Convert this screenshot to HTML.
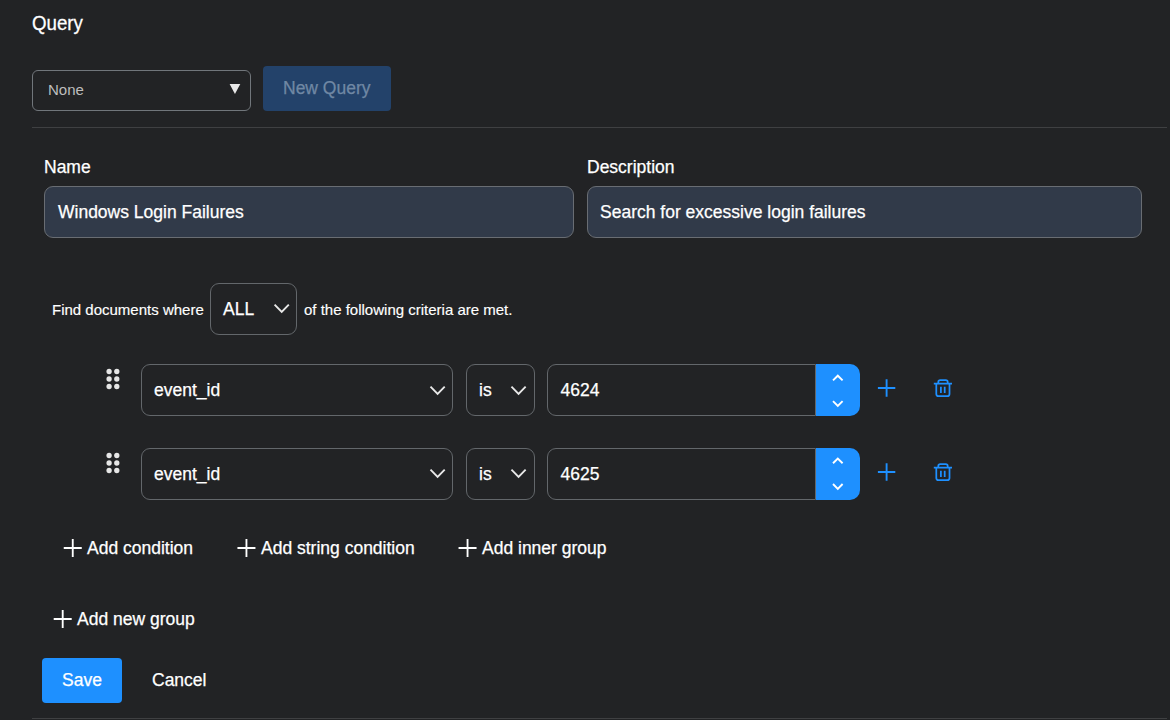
<!DOCTYPE html>
<html lang="en">
<head>
<meta charset="utf-8">
<title>Query</title>
<style>
*{box-sizing:border-box;margin:0;padding:0}
html,body{width:1170px;height:720px;overflow:hidden;background:#222325;color:#fff;
  font-family:"Liberation Sans",Arial,sans-serif;}
.abs{position:absolute}
.t{position:absolute;white-space:nowrap;line-height:1;-webkit-text-stroke:0.25px currentColor}
.box{position:absolute;border:1px solid #63676b;border-radius:9px;background:#222325}
.hr{position:absolute;height:1px;background:#3f4042}
svg{position:absolute;overflow:visible}
</style>
</head>
<body>
<!-- heading -->
<div class="t" style="left:32px;top:14px;font-size:18.72px;transform:scaleY(1.045);transform-origin:0 20%">Query</div>
<!-- query select -->
<div class="box" style="left:32px;top:70px;width:219px;height:41px;border-radius:6px;border-color:#71767b"></div>
<div class="t" style="left:48px;top:82px;font-size:15px;color:#bdbdbd;-webkit-text-stroke:0">None</div>
<svg style="left:229px;top:84px" width="12" height="11" viewBox="0 0 12 11"><g transform="translate(0.6 0)"><polygon points="0,0 10.7,0 5.35,10" fill="#e9e9e9"/></g></svg>
<!-- new query button -->
<div class="abs" style="left:263px;top:66px;width:128px;height:45px;border-radius:4px;background:#23426a"></div>
<div class="t" style="left:283px;top:79.7px;font-size:17.5px;color:#7088a4">New Query</div>
<div class="hr" style="left:32px;top:127px;width:1135px"></div>
<!-- name / description -->
<div class="t" style="left:44px;top:159px;font-size:17.5px">Name</div>
<div class="box" style="left:44px;top:186px;width:530px;height:52px;background:#313a49;border-color:#696d73"></div>
<div class="t" style="left:58px;top:204px;font-size:17.5px">Windows Login Failures</div>
<div class="t" style="left:587px;top:159px;font-size:17.5px">Description</div>
<div class="box" style="left:587px;top:186px;width:555px;height:52px;background:#313a49;border-color:#696d73"></div>
<div class="t" style="left:600px;top:204px;font-size:17.5px">Search for excessive login failures</div>
<!-- criteria line -->
<div class="t" style="left:52px;top:302px;font-size:15px;-webkit-text-stroke:0.15px currentColor">Find documents where</div>
<div class="box" style="left:210px;top:283px;width:87px;height:52px"></div>
<div class="t" style="left:223px;top:301px;font-size:17.5px">ALL</div>
<svg style="left:273px;top:303px" width="17" height="11" viewBox="0 0 17 11"><g transform="translate(0.7 0.5)"><path d="M0.9 1.2 L8 8.4 L15.1 1.2" fill="none" stroke="#e8e8e8" stroke-width="1.9"/></g></svg>
<div class="t" style="left:304px;top:302px;font-size:15px;-webkit-text-stroke:0.15px currentColor">of the following criteria are met.</div>
<!-- row 1 -->
<svg style="left:106px;top:368px" width="15" height="22" viewBox="0 0 15 22"><g transform="translate(0 0.8)"><g fill="#e6e6e6"><circle cx="3.1" cy="2.7" r="2.65"/><circle cx="10.8" cy="2.7" r="2.65"/><circle cx="3.1" cy="10.2" r="2.65"/><circle cx="10.8" cy="10.2" r="2.65"/><circle cx="3.1" cy="17.7" r="2.65"/><circle cx="10.8" cy="17.7" r="2.65"/></g></g></svg>
<div class="box" style="left:141px;top:364px;width:312px;height:52px"></div>
<div class="t" style="left:154px;top:382px;font-size:17.5px">event<span style="position:relative;top:-1px">_</span>id</div>
<svg style="left:429px;top:385px" width="17" height="11" viewBox="0 0 17 11"><g transform="translate(0.6 0.5)"><path d="M0.9 1.2 L8 8.4 L15.1 1.2" fill="none" stroke="#e8e8e8" stroke-width="1.9"/></g></svg>
<div class="box" style="left:466px;top:364px;width:69px;height:52px"></div>
<div class="t" style="left:479px;top:382px;font-size:17.5px">is</div>
<svg style="left:510px;top:385px" width="17" height="11" viewBox="0 0 17 11"><g transform="translate(0.55 0.5)"><path d="M0.9 1.2 L8 8.4 L15.1 1.2" fill="none" stroke="#e8e8e8" stroke-width="1.9"/></g></svg>
<div class="box" style="left:547px;top:364px;width:269px;height:52px;border-radius:9px 0 0 9px"></div>
<div class="abs" style="left:816px;top:364px;width:44px;height:52px;background:#1e90ff;border-radius:0 10px 10px 0"></div>
<svg style="left:831px;top:373px" width="15" height="37" viewBox="0 0 15 37"><g transform="translate(0 0)"><path d="M2 7.4 L6.8 2.7 L11.6 7.4 M2 28.1 L6.8 32.9 L11.6 28.1" fill="none" stroke="#fff" stroke-width="1.9"/></g></svg>
<div class="t" style="left:560.5px;top:382px;font-size:17.5px">4624</div>
<svg style="left:877px;top:379px" width="19" height="19" viewBox="0 0 19 19"><g transform="translate(0.6 0)"><path d="M9 0.3 V17.7 M0.3 9 H17.7" fill="none" stroke="#1e90ff" stroke-width="1.9"/></g></svg>
<svg style="left:933px;top:378px" width="21" height="21" viewBox="0 0 21 21"><g transform="translate(0 0)"><path d="M0.8 5.7 H19 M5.3 5.7 V4 Q5.3 2.1 7.3 2.1 H12.7 Q14.7 2.1 14.7 4 V5.7 M3.3 5.7 V16 Q3.3 18.2 5.5 18.2 H14.3 Q16.5 18.2 16.5 16 V5.7 M7.9 8.7 V15.1 M11.7 8.7 V15.1" fill="none" stroke="#1e90ff" stroke-width="1.75"/></g></svg>
<!-- row 2 -->
<svg style="left:106px;top:452px" width="15" height="22" viewBox="0 0 15 22"><g transform="translate(0 0.8)"><g fill="#e6e6e6"><circle cx="3.1" cy="2.7" r="2.65"/><circle cx="10.8" cy="2.7" r="2.65"/><circle cx="3.1" cy="10.2" r="2.65"/><circle cx="10.8" cy="10.2" r="2.65"/><circle cx="3.1" cy="17.7" r="2.65"/><circle cx="10.8" cy="17.7" r="2.65"/></g></g></svg>
<div class="box" style="left:141px;top:448px;width:312px;height:52px"></div>
<div class="t" style="left:154px;top:466px;font-size:17.5px">event<span style="position:relative;top:-1px">_</span>id</div>
<svg style="left:429px;top:468px" width="17" height="11" viewBox="0 0 17 11"><g transform="translate(0.6 0.4)"><path d="M0.9 1.2 L8 8.4 L15.1 1.2" fill="none" stroke="#e8e8e8" stroke-width="1.9"/></g></svg>
<div class="box" style="left:466px;top:448px;width:69px;height:52px"></div>
<div class="t" style="left:479px;top:466px;font-size:17.5px">is</div>
<svg style="left:510px;top:468px" width="17" height="11" viewBox="0 0 17 11"><g transform="translate(0.55 0.4)"><path d="M0.9 1.2 L8 8.4 L15.1 1.2" fill="none" stroke="#e8e8e8" stroke-width="1.9"/></g></svg>
<div class="box" style="left:547px;top:448px;width:269px;height:52px;border-radius:9px 0 0 9px"></div>
<div class="abs" style="left:816px;top:448px;width:44px;height:52px;background:#1e90ff;border-radius:0 10px 10px 0"></div>
<svg style="left:831px;top:455px" width="15" height="37" viewBox="0 0 15 37"><g transform="translate(0 0.9)"><path d="M2 7.4 L6.8 2.7 L11.6 7.4 M2 28.1 L6.8 32.9 L11.6 28.1" fill="none" stroke="#fff" stroke-width="1.9"/></g></svg>
<div class="t" style="left:560.5px;top:466px;font-size:17.5px">4625</div>
<svg style="left:877px;top:463px" width="19" height="19" viewBox="0 0 19 19"><g transform="translate(0.6 0)"><path d="M9 0.3 V17.7 M0.3 9 H17.7" fill="none" stroke="#1e90ff" stroke-width="1.9"/></g></svg>
<svg style="left:933px;top:462px" width="21" height="21" viewBox="0 0 21 21"><g transform="translate(0 0)"><path d="M0.8 5.7 H19 M5.3 5.7 V4 Q5.3 2.1 7.3 2.1 H12.7 Q14.7 2.1 14.7 4 V5.7 M3.3 5.7 V16 Q3.3 18.2 5.5 18.2 H14.3 Q16.5 18.2 16.5 16 V5.7 M7.9 8.7 V15.1 M11.7 8.7 V15.1" fill="none" stroke="#1e90ff" stroke-width="1.75"/></g></svg>
<!-- add buttons -->
<svg style="left:63px;top:539px" width="19" height="19" viewBox="0 0 19 19"><g transform="translate(0.75 0)"><path d="M9 0 V18.1 M0 9 H18" fill="none" stroke="#fff" stroke-width="1.85"/></g></svg>
<div class="t" style="left:87px;top:540px;font-size:17.5px">Add condition</div>
<svg style="left:237px;top:539px" width="19" height="19" viewBox="0 0 19 19"><g transform="translate(0.45 0)"><path d="M9 0 V18.1 M0 9 H18" fill="none" stroke="#fff" stroke-width="1.85"/></g></svg>
<div class="t" style="left:261px;top:540px;font-size:17.5px">Add string condition</div>
<svg style="left:458px;top:539px" width="19" height="19" viewBox="0 0 19 19"><g transform="translate(0.55 0)"><path d="M9 0 V18.1 M0 9 H18" fill="none" stroke="#fff" stroke-width="1.85"/></g></svg>
<div class="t" style="left:482px;top:540px;font-size:17.5px">Add inner group</div>
<svg style="left:53px;top:610px" width="19" height="19" viewBox="0 0 19 19"><g transform="translate(0.7 0)"><path d="M9 0 V18.1 M0 9 H18" fill="none" stroke="#fff" stroke-width="1.85"/></g></svg>
<div class="t" style="left:77px;top:611px;font-size:17.5px">Add new group</div>
<!-- save / cancel -->
<div class="abs" style="left:42px;top:658px;width:80px;height:45px;border-radius:4px;background:#1e90ff"></div>
<div class="t" style="left:62px;top:672px;font-size:17.5px">Save</div>
<div class="t" style="left:152px;top:672px;font-size:17.5px">Cancel</div>
<div class="hr" style="left:32px;top:718px;width:1135px"></div>
</body>
</html>
